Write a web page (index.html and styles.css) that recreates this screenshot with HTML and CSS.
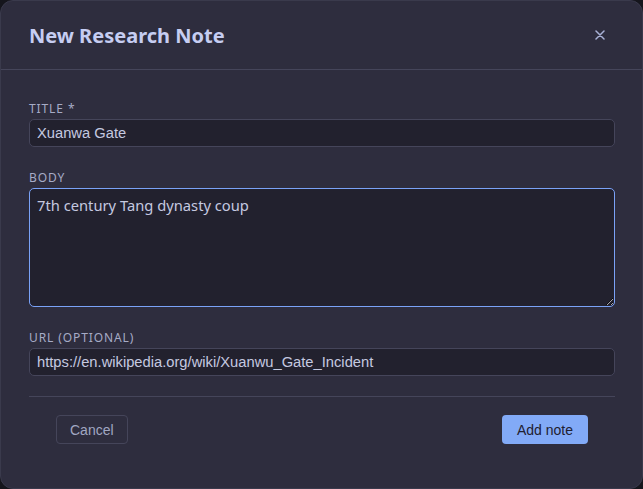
FILE: index.html
```html
<!DOCTYPE html>
<html lang="en">
<head>
    <meta charset="UTF-8">
    <meta name="viewport" content="width=device-width, initial-scale=1.0">
    <title>New Research Note</title>
    <link rel="stylesheet" href="styles.css">
</head>
<body>
    <div class="modal">
        <header class="modal-header">
            <h1>New Research Note</h1>
            <button class="close" aria-label="Close">
                <svg width="10" height="10" viewBox="0 0 10 10">
                    <path d="M1 1 L9 9 M9 1 L1 9" stroke="currentColor" stroke-width="1.5" stroke-linecap="round"/>
                </svg>
            </button>
        </header>
        <form class="modal-body">
            <div class="field">
                <label for="title">Title *</label>
                <input type="text" id="title" value="Xuanwa Gate">
            </div>
            <div class="field">
                <label for="body">Body</label>
                <textarea id="body" class="focused">7th century Tang dynasty coup</textarea>
            </div>
            <div class="field">
                <label for="url">URL (optional)</label>
                <input type="url" id="url" value="https://en.wikipedia.org/wiki/Xuanwu_Gate_Incident">
            </div>
            <div class="actions">
                <button type="button" class="btn btn-cancel">Cancel</button>
                <button type="submit" class="btn btn-primary">Add note</button>
            </div>
        </form>
    </div>
</body>
</html>
```

FILE: styles.css
```css
html, body {
    margin: 0;
    padding: 0;
    height: 100%;
    background-color: #15151c;
}
body {
    font-family: "Noto Sans", sans-serif;
    color: #c5c9e0;
}
.modal {
    box-sizing: border-box;
    height: 100%;
    background-color: #2e2d3e;
    border: 1px solid #3a3a4c;
    border-radius: 13px;
    overflow: hidden;
}
.modal-header {
    display: flex;
    align-items: center;
    justify-content: space-between;
    height: 68px;
    padding: 0 37px 0 28px;
    border-bottom: 1px solid #45455a;
}
.modal-header h1 {
    margin: 0;
    font-size: 20px;
    font-weight: 700;
    color: #c6cdf2;
}
.close {
    display: flex;
    padding: 0;
    border: none;
    background: none;
    color: #a9b1d6;
    cursor: pointer;
}
.modal-body {
    display: flex;
    flex-direction: column;
    padding: 31px 27px 0 28px;
}
.field {
    display: flex;
    flex-direction: column;
    gap: 2px;
}
.field + .field {
    margin-top: 23px;
}
.field label {
    font-size: 12px;
    line-height: 16px;
    letter-spacing: 0.9px;
    text-transform: uppercase;
    color: #a6abc6;
}
.field input, .field textarea {
    box-sizing: border-box;
    width: 100%;
    margin: 0;
    padding: 0 7px;
    background-color: #22212e;
    border: 1px solid #45455a;
    border-radius: 5px;
    color: #c5c9e0;
    font-family: "Liberation Sans", sans-serif;
    font-size: 0.92rem;
    outline: none;
}
.field input {
    height: 28px;
}
.field textarea {
    height: 119px;
    padding: 6px 7px;
    font-family: "Noto Sans", sans-serif;
    line-height: 20px;
    resize: vertical;
}
.field textarea.focused {
    border-color: #7aa2f7;
}
.actions {
    display: flex;
    justify-content: space-between;
    margin-top: 20px;
    padding: 18px 27px 0 27px;
    border-top: 1px solid #45455a;
}
.btn {
    height: 29px;
    padding: 0 13px;
    border-radius: 4px;
    font-family: "Liberation Sans", sans-serif;
    font-size: 14px;
    cursor: pointer;
}
.btn-cancel {
    background: transparent;
    border: 1px solid #45455a;
    color: #a1a7c2;
}
.btn-primary {
    padding: 0 15px;
    background-color: #82aaf7;
    border: none;
    color: #1f2030;
}
```
